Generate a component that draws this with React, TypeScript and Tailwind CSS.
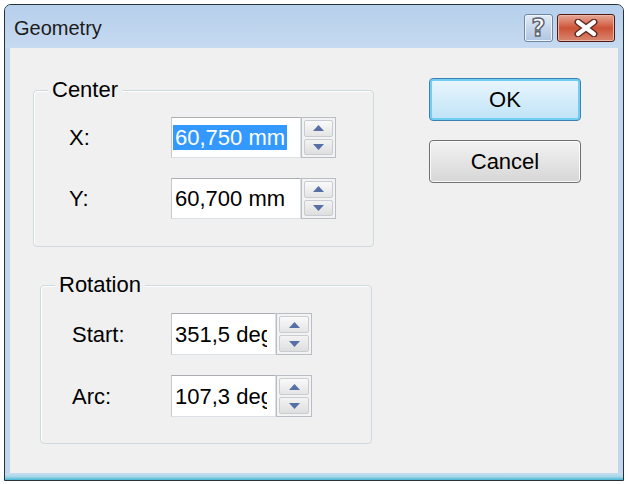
import React from 'react';

const SpinArrows: React.FC<{ w: number; h: number }> = ({ w, h }) => (
  <div
    className="flex flex-col border border-[#b9bec6] bg-[#f3f3f3] shrink-0"
    style={{ width: w, height: h }}
  >
    {/* up */}
    <div className="flex-1 flex items-center justify-center m-[2px] mb-[1px] border border-[#c9ccd1] rounded-[2px] bg-gradient-to-b from-[#fafafa] to-[#e4e4e4]">
      <svg width="11" height="6" viewBox="0 0 11 6">
        <path d="M5.5 0 L11 6 L0 6 Z" fill="#5670a6" />
      </svg>
    </div>
    {/* down */}
    <div className="flex-1 flex items-center justify-center m-[2px] mt-[1px] border border-[#c9ccd1] rounded-[2px] bg-gradient-to-b from-[#f3f3f3] to-[#dedede]">
      <svg width="11" height="6" viewBox="0 0 11 6">
        <path d="M0 0 L11 0 L5.5 6 Z" fill="#5670a6" />
      </svg>
    </div>
  </div>
);

const SpinBox: React.FC<{
  value: string;
  inputW: number;
  spinW: number;
  h: number;
  clip?: number;
  selected?: boolean;
}> = ({ value, inputW, spinW, h, clip = 0, selected }) => (
  <div className="flex">
    <div
      className="flex items-center bg-white border border-[#dbdfe6] border-t-[#abadb3] border-l-[#c4c8cf] pl-[1px]"
      style={{ width: inputW, height: h, paddingRight: clip }}
    >
      <div className="flex-1 overflow-hidden whitespace-nowrap">
        <span
          className={
            selected
              ? 'px-[2px] leading-[30px] bg-[#3399ff] text-white'
              : 'px-[2px] leading-[30px] text-black'
          }
        >
          {value}
        </span>
      </div>
    </div>
    <SpinArrows w={spinW} h={h} />
  </div>
);

const GroupBox: React.FC<{
  title: string;
  className: string;
  children: React.ReactNode;
}> = ({ title, className, children }) => (
  <div
    className={
      'relative border border-[#cfd9e0] rounded-[4px] shadow-[inset_1px_1px_0_#ffffff] ' +
      className
    }
  >
    <span className="absolute -top-[14px] left-[14px] px-[4px] bg-[#f0f0f0] leading-[26px]">
      {title}
    </span>
    {children}
  </div>
);

const App: React.FC = () => {
  return (
    <div
      className="w-[628px] h-[484px] bg-white pt-[4px] pl-[4px] text-[22px] text-black"
      style={{ fontFamily: '"Liberation Sans", Arial, sans-serif' }}
    >
      <div className="w-[620px] h-[477px] border border-[#26313a] rounded-t-[7px] bg-[#c0d6ee] flex flex-col overflow-hidden">
        {/* Title bar */}
        <div className="h-[43px] flex items-center pl-[9px] pr-[8px] bg-gradient-to-b from-[#b6cfeb] to-[#c6daf0]">
          <span className="text-[20px] text-[#1b1b1b] mt-[2px]">Geometry</span>
          <div className="ml-auto flex items-center gap-[4px] mt-[2px]">
            <div className="w-[29px] h-[28px] rounded-[3px] border border-[#6e86a4] bg-gradient-to-b from-[#e3ecf7] via-[#c6d6ea] to-[#b0c6e1] flex items-center justify-center shadow-[inset_0_0_0_1px_#eef4fb]">
              <span className="font-bold text-[24px] leading-none text-white [-webkit-text-stroke:1.5px_#5f6670] [font-family:'DejaVu_Sans',sans-serif]">
                ?
              </span>
            </div>
            <div className="w-[58px] h-[28px] rounded-[3px] border border-[#4e1a10] bg-gradient-to-b from-[#e6a896] via-[#cd5236] to-[#d7866f] flex items-center justify-center shadow-[inset_0_0_0_1px_#eab7a8]">
              <svg width="26" height="18" viewBox="0 0 26 18">
                <path d="M5 3 L21 15 M21 3 L5 15" stroke="#5b2a20" strokeWidth="7" strokeLinecap="round" />
                <path d="M5 3 L21 15 M21 3 L5 15" stroke="#ffffff" strokeWidth="4.2" strokeLinecap="round" />
              </svg>
            </div>
          </div>
        </div>

        {/* Client area */}
        <div className="h-[425px] ml-[5px] mr-[5px] bg-[#f0f0f0] flex items-start">
          <div className="flex flex-col pl-[23px] pt-[42px]">
            <GroupBox title="Center" className="w-[341px] h-[157px]">
              <div className="flex flex-col gap-[20px] pt-[26px] pl-[35px]">
                <div className="flex items-center">
                  <span className="w-[102px]">X:</span>
                  <SpinBox value="60,750 mm" inputW={130} spinW={35} h={41} selected />
                </div>
                <div className="flex items-center">
                  <span className="w-[102px]">Y:</span>
                  <SpinBox value="60,700 mm" inputW={130} spinW={35} h={41} />
                </div>
              </div>
            </GroupBox>
            <GroupBox title="Rotation" className="w-[332px] h-[159px] mt-[38px] ml-[7px]">
              <div className="flex flex-col gap-[20px] pt-[27px] pl-[31px]">
                <div className="flex items-center">
                  <span className="w-[99px]">Start:</span>
                  <SpinBox value="351,5 deg" inputW={105} spinW={36} h={42} clip={8} />
                </div>
                <div className="flex items-center">
                  <span className="w-[99px]">Arc:</span>
                  <SpinBox value="107,3 deg" inputW={105} spinW={36} h={42} clip={8} />
                </div>
              </div>
            </GroupBox>
          </div>

          <div className="flex flex-col gap-[19px] pt-[30px] ml-[55px]">
            <button className="w-[152px] h-[43px] rounded-[4px] border border-[#3c7fb1] bg-gradient-to-b from-[#eaf6fd] to-[#bfe3f7] shadow-[inset_0_0_0_2px_#72cdf2] flex items-center justify-center">
              OK
            </button>
            <button className="w-[152px] h-[43px] rounded-[4px] border border-[#707070] bg-gradient-to-b from-[#f3f3f3] to-[#d6d6d6] shadow-[inset_0_0_0_1px_#fbfbfb] flex items-center justify-center">
              Cancel
            </button>
          </div>
        </div>

        {/* Bottom frame */}
        <div className="h-[7px] bg-gradient-to-b from-[#c8dcf1] via-[#a8d8ea] to-[#3fb6d2]" />
      </div>
    </div>
  );
};

export default App;
